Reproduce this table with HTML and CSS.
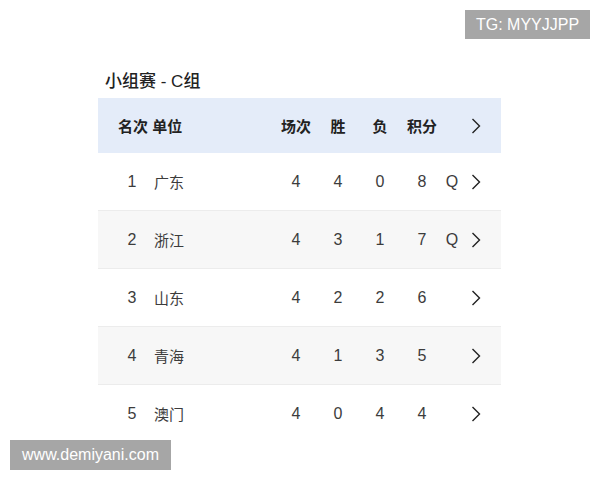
FILE: index.html
```html
<!DOCTYPE html>
<html lang="zh">
<head>
<meta charset="utf-8">
<title>小组赛 - C组</title>
<link rel="stylesheet" href="styles.css">
</head>
<body>
<div class="page">
  <section class="card">
    <h1 class="title">小组赛 - C组</h1>
    <div class="table">
      <div class="row head">
        <div class="lead">名次 单位</div>
        <div class="num">场次</div>
        <div class="num">胜</div>
        <div class="num">负</div>
        <div class="num">积分</div>
        <div class="q"></div>
        <div class="chev"><svg viewBox="0 0 10 16" width="10" height="16"><path d="M1.5 1 L8.5 8 L1.5 15" fill="none" stroke="#222" stroke-width="1.4"/></svg></div>
      </div>
      <div class="row">
        <div class="rank">1</div><div class="name">广东</div>
        <div class="num">4</div><div class="num">4</div><div class="num">0</div><div class="num">8</div>
        <div class="q">Q</div>
        <div class="chev"><svg viewBox="0 0 10 16" width="10" height="16"><path d="M1.5 1 L8.5 8 L1.5 15" fill="none" stroke="#222" stroke-width="1.4"/></svg></div>
      </div>
      <div class="row alt">
        <div class="rank">2</div><div class="name">浙江</div>
        <div class="num">4</div><div class="num">3</div><div class="num">1</div><div class="num">7</div>
        <div class="q">Q</div>
        <div class="chev"><svg viewBox="0 0 10 16" width="10" height="16"><path d="M1.5 1 L8.5 8 L1.5 15" fill="none" stroke="#222" stroke-width="1.4"/></svg></div>
      </div>
      <div class="row">
        <div class="rank">3</div><div class="name">山东</div>
        <div class="num">4</div><div class="num">2</div><div class="num">2</div><div class="num">6</div>
        <div class="q"></div>
        <div class="chev"><svg viewBox="0 0 10 16" width="10" height="16"><path d="M1.5 1 L8.5 8 L1.5 15" fill="none" stroke="#222" stroke-width="1.4"/></svg></div>
      </div>
      <div class="row alt">
        <div class="rank">4</div><div class="name">青海</div>
        <div class="num">4</div><div class="num">1</div><div class="num">3</div><div class="num">5</div>
        <div class="q"></div>
        <div class="chev"><svg viewBox="0 0 10 16" width="10" height="16"><path d="M1.5 1 L8.5 8 L1.5 15" fill="none" stroke="#222" stroke-width="1.4"/></svg></div>
      </div>
      <div class="row last">
        <div class="rank">5</div><div class="name">澳门</div>
        <div class="num">4</div><div class="num">0</div><div class="num">4</div><div class="num">4</div>
        <div class="q"></div>
        <div class="chev"><svg viewBox="0 0 10 16" width="10" height="16"><path d="M1.5 1 L8.5 8 L1.5 15" fill="none" stroke="#222" stroke-width="1.4"/></svg></div>
      </div>
    </div>
  </section>
  <div class="mark mark-top">TG: MYYJJPP</div>
  <div class="mark mark-bottom">www.demiyani.com</div>
</div>
</body>
</html>
```

FILE: styles.css
```css
html, body {
  margin: 0;
  padding: 0;
  background: #ffffff;
}
body {
  font-family: "Liberation Sans", "Noto Sans CJK SC", sans-serif;
  color: #333;
}
.page {
  position: relative;
  width: 600px;
  height: 480px;
  overflow: hidden;
}
.card {
  width: 403px;
  margin-left: 98px;
  padding-top: 70px;
}
.title {
  margin: 0 0 5px 7px;
  font-size: 17px;
  line-height: 23px;
  font-weight: 500;
  color: #222;
}
.table {
  display: flex;
  flex-direction: column;
}
.row {
  display: flex;
  align-items: center;
  height: 57px;
  border-bottom: 1px solid #ececec;
  font-size: 16px;
  color: #3c3c3c;
  background: #ffffff;
}
.row.alt {
  background: #f7f7f7;
}
.row.last {
  border-bottom: none;
}
.row.head {
  height: 55px;
  border-bottom: none;
  background: #e4ecf9;
  color: #222;
  font-size: 15px;
  font-weight: 700;
}
.lead {
  flex: 1;
  padding-left: 20px;
}
.rank {
  width: 28px;
  margin-left: 20px;
  text-align: center;
}
.name {
  flex: 1;
  margin-left: 8px;
  font-size: 15px;
}
.num {
  width: 42px;
  text-align: center;
}
.q {
  width: 18px;
  text-align: center;
}
.chev {
  width: 20px;
  margin-left: 5px;
  margin-right: 15px;
  display: flex;
  justify-content: center;
  align-items: center;
}
.chev svg {
  display: block;
}
.mark {
  position: absolute;
  background: #a6a6a6;
  color: #ffffff;
  font-family: "Liberation Sans", sans-serif;
  font-size: 16px;
  text-align: center;
}
.mark-top {
  left: 465px;
  top: 10px;
  width: 125px;
  height: 29px;
  line-height: 29px;
}
.mark-bottom {
  left: 10px;
  top: 440px;
  width: 161px;
  height: 30px;
  line-height: 30px;
}
```
